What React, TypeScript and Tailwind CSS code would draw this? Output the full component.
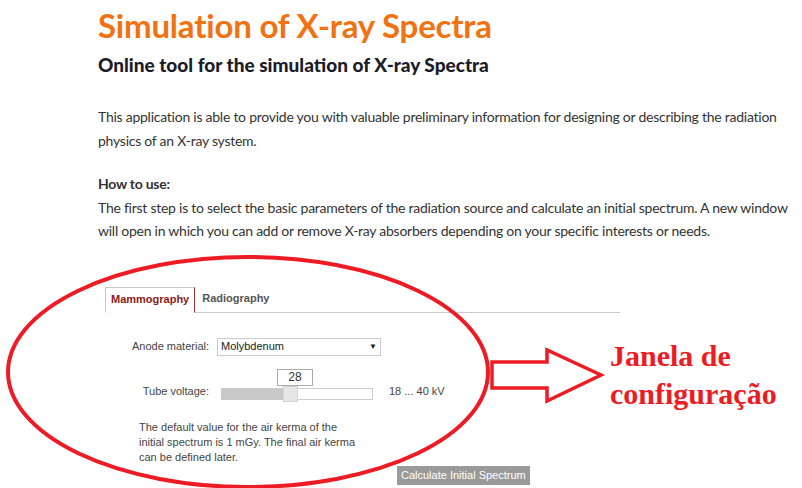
import React from 'react';

const tabs = ['Mammography', 'Radiography'];

export default function App() {
  const [active, setActive] = React.useState(0);

  return (
    <div className="relative w-[802px] h-[488px] overflow-hidden bg-white">
      <div className="pl-[98px]">
        {/* Heading */}
        <h1 className="mt-[6px] text-[33px] leading-[38px] font-bold text-[#f07212] tracking-[-0.2px] font-['Lato',sans-serif]">
          Simulation of X-ray Spectra
        </h1>
        <h2 className="mt-[10px] text-[19px] leading-[22px] font-black text-[#1c1c28] font-['Lato',sans-serif]">
          Online tool for the simulation of X-ray Spectra
        </h2>

        {/* Intro */}
        <div className="mt-[29px] text-[14px] leading-[23.5px] tracking-[-0.25px] text-[#333] font-['Lato',sans-serif]">
          <p>
            This application is able to provide you with valuable preliminary information for designing or describing the radiation physics of an X-ray system.
          </p>
          <p className="mt-[20px] font-bold">How to use:</p>
          <p>
            The first step is to select the basic parameters of the radiation source and calculate an initial spectrum. A new window will open in which you can add or remove X-ray absorbers depending on your specific interests or needs.
          </p>
        </div>

        {/* Configuration panel */}
        <div className="mt-[44px] ml-[7px] w-[515px] font-['Liberation_Sans',Arial,sans-serif] text-[11px] text-[#333]">
          <div className="flex items-end border-b border-[#ccc] h-[26px]">
            {tabs.map((t, i) => (
              <button
                key={t}
                onClick={() => setActive(i)}
                className={
                  i === active
                    ? 'h-[26px] -mb-px px-[5px] bg-white border border-[#c8c8c8] border-r-[#a33] border-b-white font-bold text-[#8b1a1a]'
                    : 'h-[26px] px-[7px] font-bold text-[#555]'
                }
              >
                {t}
              </button>
            ))}
          </div>

          <div className="mt-[25px] flex items-center">
            <span className="w-[104px] text-right text-[#444]">Anode material:</span>
            <div className="ml-[8px] w-[164px] h-[18px] border border-[#ccc] flex items-center justify-between px-[3px] text-[#222]">
              <span>Molybdenum</span>
              <span className="text-[8px]">▼</span>
            </div>
          </div>

          <div className="mt-[13px] flex items-start">
            <span className="w-[104px] pt-[14px] text-right text-[#444]">Tube voltage:</span>
            <div className="ml-[12px] relative w-[152px] h-[32px]">
              <div className="absolute left-[56px] top-0 w-[36px] h-[17px] border border-[#aaa] bg-white text-center text-[12px] leading-[15px] text-[#333]">
                28
              </div>
              <div className="absolute left-0 top-[19px] w-full h-[12px] border border-[#ccc] bg-white">
                <div className="h-full w-[62px] bg-[#c8c8c8]" />
              </div>
              <div className="absolute left-[62px] top-[17px] w-[15px] h-[16px] bg-[#e6e6e6] border border-[#d3d3d3]" />
            </div>
            <span className="ml-[16px] pt-[14px] text-[#444]">18 ... 40 kV</span>
          </div>

          <p className="mt-[19px] ml-[34px] w-[218px] leading-[15px] text-[#444]">
            The default value for the air kerma of the initial spectrum is 1 mGy. The final air kerma can be defined later.
          </p>

          <button className="mt-[1px] ml-[292px] h-[19px] px-[4px] bg-[#9a9a9a] text-white text-[11px] leading-[19px]">
            Calculate Initial Spectrum
          </button>
        </div>
      </div>

      {/* Red annotation: ellipse + arrow */}
      <svg className="absolute left-0 top-0 pointer-events-none" width="802" height="488" viewBox="0 0 802 488">
        <ellipse cx="248" cy="372" rx="240" ry="115" fill="none" stroke="#ed1c24" strokeWidth="4" />
        <path
          d="M492 362 H547 V350 L601 375 L547 401 V388 H492 Z"
          fill="white"
          stroke="#ed1c24"
          strokeWidth="3.5"
          strokeLinejoin="miter"
        />
      </svg>
      <div className="absolute left-[610px] top-[337px] text-[30px] leading-[38px] font-bold text-[#ed1c24] font-['Liberation_Serif','Times_New_Roman',serif]">
        Janela de
        <br />
        configuração
      </div>
    </div>
  );
}
